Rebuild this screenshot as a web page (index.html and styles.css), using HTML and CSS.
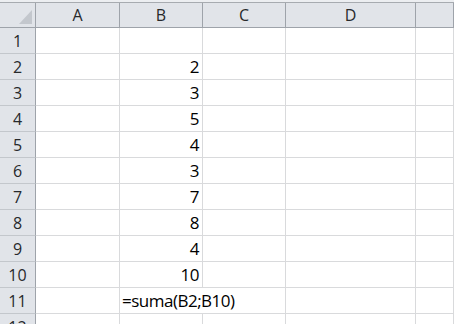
FILE: index.html
```html
<!DOCTYPE html>
<html lang="es">
<head>
    <meta charset="UTF-8">
    <title>Hoja1</title>
    <link rel="stylesheet" href="styles.css">
</head>
<body>
    <div class="top-band"></div>
    <div class="sheet">
        <!-- cabecera de columnas -->
        <div class="hd corner"><span class="tri"></span></div>
        <div class="hd col">A</div>
        <div class="hd col">B</div>
        <div class="hd col">C</div>
        <div class="hd col">D</div>
        <div class="hd col"></div>

        <div class="hd row">1</div><div class="c"></div><div class="c"></div><div class="c"></div><div class="c"></div><div class="c"></div>
        <div class="hd row">2</div><div class="c"></div><div class="c num">2</div><div class="c"></div><div class="c"></div><div class="c"></div>
        <div class="hd row">3</div><div class="c"></div><div class="c num">3</div><div class="c"></div><div class="c"></div><div class="c"></div>
        <div class="hd row">4</div><div class="c"></div><div class="c num">5</div><div class="c"></div><div class="c"></div><div class="c"></div>
        <div class="hd row">5</div><div class="c"></div><div class="c num">4</div><div class="c"></div><div class="c"></div><div class="c"></div>
        <div class="hd row">6</div><div class="c"></div><div class="c num">3</div><div class="c"></div><div class="c"></div><div class="c"></div>
        <div class="hd row">7</div><div class="c"></div><div class="c num">7</div><div class="c"></div><div class="c"></div><div class="c"></div>
        <div class="hd row">8</div><div class="c"></div><div class="c num">8</div><div class="c"></div><div class="c"></div><div class="c"></div>
        <div class="hd row">9</div><div class="c"></div><div class="c num">4</div><div class="c"></div><div class="c"></div><div class="c"></div>
        <div class="hd row">10</div><div class="c"></div><div class="c num">10</div><div class="c"></div><div class="c"></div><div class="c"></div>
        <div class="hd row">11</div><div class="c"></div><div class="c text">=suma(B2;B10)</div><div class="c"></div><div class="c"></div><div class="c"></div>
        <div class="hd row">12</div><div class="c"></div><div class="c"></div><div class="c"></div><div class="c"></div><div class="c"></div>
    </div>
</body>
</html>
```

FILE: styles.css
```css
/* hoja completa */
body {
    margin: 0;
    background: #fff;
    overflow: hidden;
    font-family: "Open Sans", "Liberation Sans", sans-serif;
    color: #000;
}

/* franja gris de arriba */
.top-band {
    height: 2px;
    background: #eceef1;
    border-bottom: 1px solid #a7abb0;
}

/* rejilla de celdas */
.sheet {
    display: grid;
    grid-template-columns: 36px 84px 83px 83px 130px 1fr;
    grid-template-rows: 25px;
    grid-auto-rows: 26px;
}

.sheet > div {
    box-sizing: border-box;
}

/* cabeceras */
.hd {
    background: #e1e4e9;
    color: #27292c;
    font-size: 16px;
    display: flex;
    align-items: center;
    justify-content: center;
}

.hd.col {
    border-right: 1px solid #9ea3aa;
    border-bottom: 1px solid #9ea3aa;
}

.hd.row {
    border-right: 1px solid #9ea3aa;
    border-bottom: 1px solid #c3c7cc;
    padding-top: 1px;
}

.hd.corner {
    border-right: 1px solid #9ea3aa;
    border-bottom: 1px solid #9ea3aa;
    position: relative;
}

/* triangulo de la esquina */
.tri {
    position: absolute;
    right: 3px;
    bottom: 3px;
    width: 0;
    height: 0;
    border-left: 13px solid transparent;
    border-bottom: 14px solid #c3c7cd;
}

/* celdas normales */
.c {
    border-right: 1px solid #d9dadc;
    border-bottom: 1px solid #d9dadc;
    font-size: 17px;
    letter-spacing: -0.5px;
    line-height: 25px;
    white-space: nowrap;
}

.num {
    text-align: right;
    padding-right: 3px;
}

/* el texto de la formula se sale a la celda C */
.text {
    padding-left: 2px;
    border-right: none;
    position: relative;
    z-index: 1;
}
```
